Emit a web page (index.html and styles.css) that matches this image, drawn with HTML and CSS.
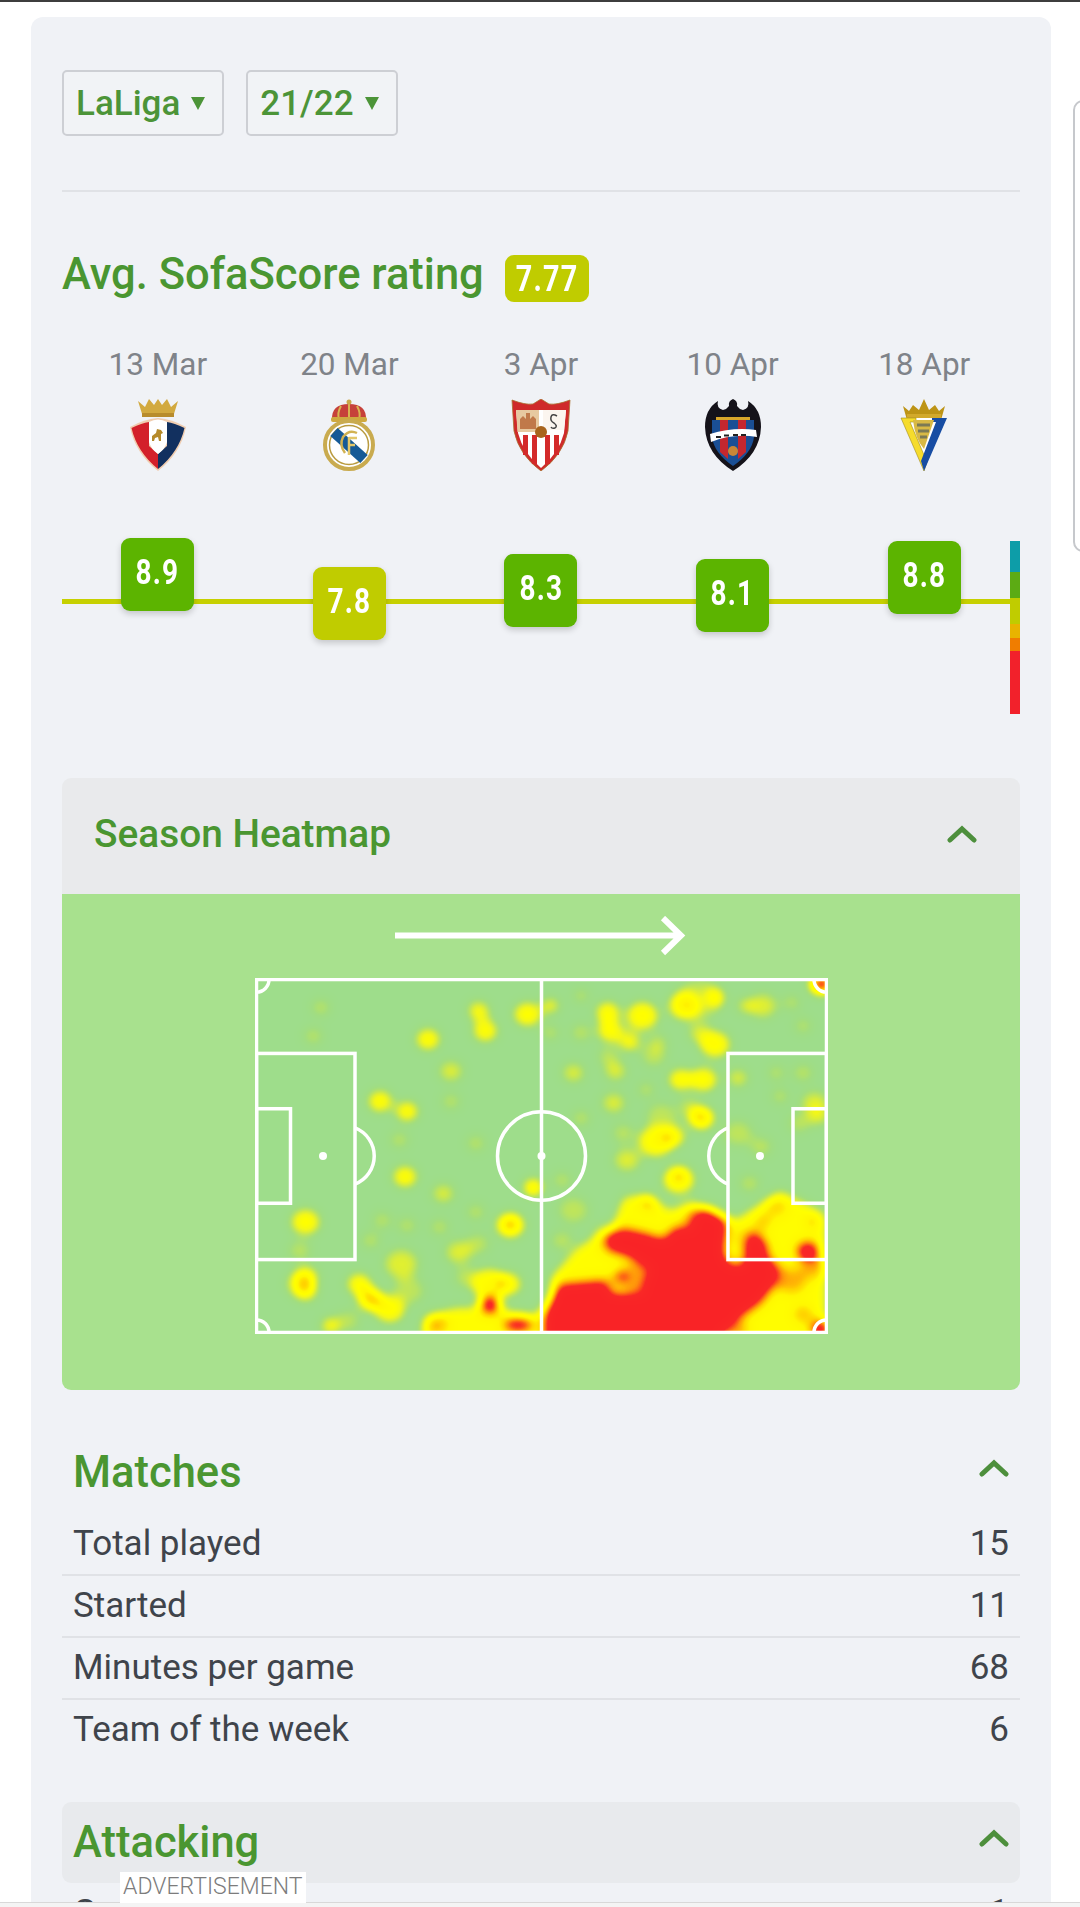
FILE: index.html
```html
<!DOCTYPE html>
<html lang="en">
<head>
<meta charset="utf-8">
<title>Player statistics</title>
<link rel="stylesheet" href="styles.css">
</head>
<body>
<div class="topbar"></div>
<div class="sidepanel"></div>
<main class="card">
  <div class="selects">
    <button class="select">LaLiga<span class="caret"></span></button>
    <button class="select">21/22<span class="caret"></span></button>
  </div>
  <hr class="rule">
  <div class="rating-head">
    <h2 class="rating-title">Avg. SofaScore rating</h2>
    <span class="badge lime"><span class="cond">7.77</span></span>
  </div>
  <div class="matches-grid">
    <div class="match">
      <div class="date">13 Mar</div>
      <svg class="crest" viewBox="0 0 60 72" aria-label="Osasuna">
        <path d="M10 2l7 6 4-8 5 6 4-6 4 6 5-6 4 8 7-6-5 16H15z" fill="#d2a93f"/>
        <rect x="14" y="14" width="32" height="4" fill="#b88c2c"/>
        <path d="M2 28Q16 20 30 19 44 20 58 28 53 54 30 72 7 54 2 28z" fill="#f0cdb0"/>
        <path d="M3.500 29Q14 24 21 23V47L30 55V70Q9 53 3.500 29z" fill="#d3202a"/>
        <path d="M56.500 29Q46 24 39 23V47L30 55V70Q51 53 56.500 29z" fill="#12305f"/>
        <path d="M21 23Q30 18 39 23V43Q37 50 30 55 23 50 21 43z" fill="#fff"/>
        <path d="M24 37l4-3 1-4 4 1 2 3-2 1v7h-2l-1-4-3 1-1 3h-2z" fill="#b58a2a"/>
      </svg>
    </div>
    <div class="match">
      <div class="date">20 Mar</div>
      <svg class="crest" viewBox="0 0 60 72" aria-label="Real Madrid">
        <path d="M13 21Q12 5 30 5 48 5 47 21z" fill="#c6413a"/>
        <path d="M30 5V20M22 7Q18 14 20 20M38 7Q42 14 40 20" stroke="#d9b44f" stroke-width="2" fill="none"/>
        <circle cx="30" cy="3" r="2.500" fill="#c9a94a"/>
        <rect x="12" y="18" width="36" height="5" rx="2" fill="#cfa93f"/>
        <circle cx="30" cy="46" r="24" fill="#fff" stroke="#c9ab4f" stroke-width="4"/>
        <circle cx="30" cy="46" r="19.500" fill="none" stroke="#b99b3f" stroke-width="1.500"/>
        <path d="M15 33L45 60" stroke="#165a96" stroke-width="11"/>
        <path d="M38 34Q30 30 24 38 20 46 26 54" stroke="#d2b252" stroke-width="2.500" fill="none"/>
        <path d="M30 38V56M30 39H38M30 46H36" stroke="#e3c76a" stroke-width="2.500" fill="none"/>
      </svg>
    </div>
    <div class="match">
      <div class="date">3 Apr</div>
      <svg class="crest" viewBox="0 0 60 72" aria-label="Sevilla">
        <path d="M1 1Q14 6 22 5L30 0 38 5Q46 6 59 1L57 32Q52 56 30 72 8 56 3 32z" fill="#cf2a2a" stroke="#a9702e" stroke-width=".800"/>
        <path d="M5 11H55L53 34Q48 54 30 69 12 54 7 34z" fill="#fff"/>
        <path d="M5 11H28V33H6.500z" fill="#e7c9a0"/>
        <path d="M9 30V20l3-3 3 3v-6h4v6l3-3 3 3v10z" fill="#c0794a"/>
        <path d="M32 11H55L53 31H32z" fill="#fbf5ef"/>
        <path d="M46 17Q41 14 40 18 39 22 43 24 47 27 44 29 41 30 40 28" stroke="#444" stroke-width="1.500" fill="none"/>
        <path d="M12 36H17V56H12zM21 36H26V65H21zM34 36H39V65H34zM43 36H48V56H43z" fill="#d42a2a"/>
        <circle cx="30" cy="33" r="6" fill="#a8641d"/>
      </svg>
    </div>
    <div class="match">
      <div class="date">10 Apr</div>
      <svg class="crest" viewBox="0 0 60 72" aria-label="Levante">
        <path d="M30 72Q3 55 2 28 2 10 15 2 13 9 20 11 24 10 26 7 25 2 30 0 35 2 34 7 36 10 40 11 47 9 45 2 58 10 58 28 57 55 30 72z" fill="#15131a"/>
        <path d="M9 21H51V38Q49 54 30 67 11 54 9 38z" fill="#1a4f95"/>
        <path d="M17 21H25V60L17 53zM35 21H43V53L35 60z" fill="#c4272f"/>
        <path d="M7 35Q30 28 53 31L54 38Q30 34 8 43z" fill="#fff"/>
        <path d="M13 38H18M21 36.500H26M30 36H35M38 36H43" stroke="#222" stroke-width="2"/>
        <circle cx="30" cy="52" r="5" fill="#c88736"/>
        <rect x="13" y="18" width="34" height="3" fill="#d9a72b"/>
      </svg>
    </div>
    <div class="match">
      <div class="date">18 Apr</div>
      <svg class="crest" viewBox="0 0 60 72" aria-label="Cadiz">
        <path d="M9 7l6 5 4-6 6 5 5-11 5 11 6-5 4 6 6-5-4 14H13z" fill="#bd9416"/>
        <rect x="13" y="15" width="34" height="4" fill="#d2a92b"/>
        <path d="M7 19H53L30 72z" fill="#fff"/>
        <path d="M7 19H22V23H16L33 63 30 72z" fill="#f6dc2c" stroke="#9f8a1c" stroke-width=".600"/>
        <path d="M38 19H53L30 72 27 62 42 23H38z" fill="#174da3"/>
        <path d="M19 21H40L30 50Q21 40 19 21z" fill="#d8b945"/>
        <path d="M23 26H36M24 32H35M26 38H33" stroke="#7c7a55" stroke-width="3"/>
      </svg>
    </div>
  </div>
  <div class="chart">
    <div class="chart-line"></div>
    <div class="scale">
      <span class="s-teal"></span><span class="s-green"></span><span class="s-lime"></span><span class="s-gold"></span><span class="s-orange"></span><span class="s-red"></span>
    </div>
    <div class="chart-points">
      <div class="point" style="margin-top:0"><span class="score green"><span class="cond">8.9</span></span></div>
      <div class="point" style="margin-top:29px"><span class="score lime"><span class="cond">7.8</span></span></div>
      <div class="point" style="margin-top:16px"><span class="score green"><span class="cond">8.3</span></span></div>
      <div class="point" style="margin-top:21px"><span class="score green"><span class="cond">8.1</span></span></div>
      <div class="point" style="margin-top:3px"><span class="score green"><span class="cond">8.8</span></span></div>
    </div>
  </div>

  <section class="heatmap">
    <header class="heat-head">
      <h3 class="heat-title">Season Heatmap</h3>
      <svg class="chev" viewBox="0 0 30 18"><path d="M3 15L15 4 27 15"/></svg>
    </header>
    <div class="heat-body">
      <svg class="arrow" viewBox="0 0 292 40"><path d="M0 19.500H285M268 2L286 19.500 268 37"/></svg>
      <svg class="pitch" viewBox="0 0 573 354" preserveAspectRatio="none">
        <defs>
          <filter id="heat" filterUnits="userSpaceOnUse" x="-30" y="-30" width="633" height="414" color-interpolation-filters="sRGB">
            <feGaussianBlur stdDeviation="6"/>
            <feColorMatrix type="matrix" values="0 0 0 1 0 0 0 0 1 0 0 0 0 1 0 0 0 0 1 0"/>
            <feComponentTransfer>
              <feFuncR type="table" tableValues=".62 .66 .76 .86 .95 1 1 1 1 .98 .98"/>
              <feFuncG type="table" tableValues=".85 .87 .9 .93 .97 1 .97 .82 .55 .16 .14"/>
              <feFuncB type="table" tableValues=".45 .42 .33 .22 .1 0 0 0 .05 .15 .15"/>
              <feFuncA type="table" tableValues="0 .3 .65 .9 1 1 1 1 1 1 1"/>
            </feComponentTransfer>
          </filter>
          <clipPath id="pitch-clip"><rect width="573" height="354"/></clipPath>
        </defs>
        <rect class="turf" width="573" height="354"/>
        <g clip-path="url(#pitch-clip)">
          <g filter="url(#heat)">
            <g transform="translate(-14.500 -79) scale(.3827 .3333)">
              <g fill="#000" fill-opacity=".24">
                <circle cx="210" cy="325" r="26"/><circle cx="190" cy="410" r="26"/><circle cx="620" cy="330" r="28"/><circle cx="810" cy="320" r="26"/><circle cx="890" cy="290" r="22"/><circle cx="1440" cy="310" r="24"/><circle cx="1470" cy="380" r="24"/><circle cx="890" cy="400" r="28"/><circle cx="810" cy="400" r="24"/><circle cx="1080" cy="470" r="34"/><circle cx="960" cy="470" r="28"/><circle cx="1090" cy="430" r="28"/><circle cx="1400" cy="520" r="24"/><circle cx="1470" cy="520" r="28"/><circle cx="1060" cy="570" r="24"/><circle cx="1410" cy="590" r="24"/><circle cx="890" cy="655" r="26"/><circle cx="550" cy="605" r="26"/><circle cx="415" cy="720" r="26"/><circle cx="615" cy="730" r="26"/><circle cx="840" cy="840" r="26"/><circle cx="1330" cy="850" r="28"/><circle cx="1360" cy="740" r="30"/><circle cx="520" cy="980" r="26"/><circle cx="370" cy="960" r="26"/><circle cx="435" cy="975" r="26"/><circle cx="615" cy="935" r="26"/><circle cx="870" cy="930" r="42"/><circle cx="840" cy="1020" r="30"/><circle cx="1460" cy="670" r="30"/><circle cx="340" cy="1020" r="26"/><circle cx="155" cy="1050" r="30"/><circle cx="590" cy="1130" r="32"/><circle cx="1170" cy="620" r="28"/><circle cx="950" cy="1000" r="32"/><circle cx="1200" cy="300" r="62"/><circle cx="1100" cy="650" r="42"/><circle cx="1010" cy="420" r="32"/><circle cx="620" cy="1030" r="32"/><circle cx="280" cy="1260" r="32"/><circle cx="440" cy="1170" r="42"/><circle cx="1320" cy="1010" r="32"/><circle cx="1300" cy="700" r="40"/><circle cx="1000" cy="700" r="30"/>
              </g>
              <g fill="#000" fill-opacity=".34">
                <circle cx="625" cy="340" r="28"/><circle cx="810" cy="320" r="18"/><circle cx="530" cy="880" r="30"/><circle cx="975" cy="610" r="32"/><circle cx="550" cy="515" r="32"/><circle cx="870" cy="520" r="30"/><circle cx="980" cy="515" r="30"/><circle cx="1300" cy="535" r="28"/><circle cx="1365" cy="320" r="38"/><circle cx="1320" cy="320" r="24"/><circle cx="1010" cy="780" r="36"/><circle cx="1500" cy="610" r="36"/><circle cx="1510" cy="650" r="28"/><circle cx="1200" cy="400" r="30"/><circle cx="420" cy="1090" r="46"/><circle cx="570" cy="1055" r="36"/><circle cx="155" cy="1150" r="36"/><circle cx="1400" cy="920" r="32"/><circle cx="1020" cy="430" r="26"/><circle cx="1200" cy="650" r="32"/><circle cx="765" cy="860" r="28"/>
              </g>
              <g fill="#000" fill-opacity=".52">
                <circle cx="750" cy="345" r="36"/><circle cx="640" cy="395" r="32"/><circle cx="490" cy="420" r="32"/><circle cx="365" cy="605" r="32"/><circle cx="435" cy="635" r="30"/><circle cx="430" cy="830" r="32"/><circle cx="960" cy="340" r="32"/><circle cx="965" cy="395" r="32"/><circle cx="1050" cy="350" r="42"/><circle cx="1160" cy="320" r="42"/><circle cx="1240" cy="295" r="26"/><circle cx="1240" cy="435" r="40"/><circle cx="1150" cy="540" r="32"/><circle cx="1210" cy="540" r="36"/><circle cx="1205" cy="655" r="34"/><circle cx="1085" cy="725" r="46"/><circle cx="1130" cy="710" r="32"/><circle cx="170" cy="965" r="38"/><circle cx="170" cy="1130" r="32"/><circle cx="170" cy="1170" r="30"/><circle cx="390" cy="1225" r="40"/><circle cx="310" cy="1150" r="32"/><circle cx="340" cy="1195" r="36"/><circle cx="235" cy="1275" r="24"/><circle cx="650" cy="1150" r="46"/><circle cx="700" cy="1150" r="34"/><circle cx="705" cy="975" r="38"/><circle cx="765" cy="865" r="22"/><circle cx="1145" cy="840" r="42"/>
                <path d="M810 1340V1130L880 1040 970 980 1000 890 1070 880 1120 930 1180 900 1260 950 1290 960 1410 870 1530 940V1340z"/>
                <path d="M470 1340L480 1250 560 1220 640 1220 780 1240V1340z"/>
              </g>
              <g fill="#000" fill-opacity=".48">
                <circle cx="705" cy="972" r="24"/><circle cx="1145" cy="825" r="22"/><circle cx="1065" cy="910" r="22"/><circle cx="1365" cy="965" r="22"/><circle cx="1495" cy="965" r="18"/><circle cx="340" cy="1195" r="22"/><circle cx="510" cy="1270" r="34"/><circle cx="1440" cy="1140" r="42"/><circle cx="1500" cy="1100" r="36"/><circle cx="1200" cy="960" r="44"/><circle cx="1040" cy="1130" r="44"/><circle cx="1470" cy="1240" r="26"/><circle cx="1300" cy="1290" r="30"/>
              </g>
              <path fill="none" stroke="#000" stroke-opacity=".42" stroke-width="46" stroke-linejoin="round" d="M800 1340L800 1240 840 1160 950 1150 960 1190 1060 1190 1070 1140 1090 1100 1020 1060 965 1040 965 1010 1000 995 1060 1010 1110 1030 1140 990 1185 1000 1200 1020 1190 960 1220 935 1260 960 1255 1010 1250 1060 1270 1100 1320 1110 1340 1010 1365 1040 1370 1080 1395 1100 1390 1140 1350 1200 1300 1240 1250 1290 1240 1340z"/>
              <g fill="#000" stroke="#000">
                <path stroke-width="20" d="M800 1340L800 1240 840 1160 950 1150 960 1190 1060 1190 1070 1140 1090 1100 1020 1060 965 1040 965 1010 1000 995 1060 1010 1110 1030 1140 990 1185 1000 1200 1020 1190 960 1220 935 1260 960 1255 1010 1250 1060 1270 1100 1320 1110 1340 1010 1365 1040 1370 1080 1395 1100 1390 1140 1350 1200 1300 1240 1250 1290 1240 1340z"/>
                <ellipse cx="1345" cy="1040" rx="30" ry="40"/><circle cx="1482" cy="1052" r="32"/><circle cx="652" cy="1212" r="30"/><ellipse cx="725" cy="1272" rx="42" ry="22"/><circle cx="995" cy="1128" r="20"/><circle cx="1518" cy="255" r="30"/><circle cx="1518" cy="1285" r="30"/>
              </g>
            </g>
          </g>
        </g>
        <g class="lines">
          <rect x="1.500" y="1.500" width="570" height="351"/>
          <path d="M286.500 1.500V352.500"/>
          <circle cx="286.500" cy="177" r="44"/>
          <rect x="1.500" y="75" width="98.500" height="205"/>
          <rect x="1.500" y="130" width="34" height="94"/>
          <path d="M100 149A30 30 0 0 1 100 205"/>
          <rect x="473" y="75" width="98.500" height="205"/>
          <rect x="538" y="130" width="33.500" height="94"/>
          <path d="M473 149A30 30 0 0 0 473 205"/>
          <path d="M1.500 14A12.500 12.500 0 0 0 14 1.500M1.500 340A12.500 12.500 0 0 1 14 352.500M559 1.500A12.500 12.500 0 0 0 571.500 14M559 352.500A12.500 12.500 0 0 1 571.500 340"/>
        </g>
        <g fill="#fff">
          <circle cx="68" cy="177" r="4"/><circle cx="286.500" cy="177" r="4"/><circle cx="505" cy="177" r="4"/>
        </g>
      </svg>
    </div>
  </section>

  <section class="stats">
    <header class="stats-head">
      <h3 class="stats-title">Matches</h3>
      <svg class="chev" viewBox="0 0 30 18"><path d="M3 15L15 4 27 15"/></svg>
    </header>
    <div class="row"><span>Total played</span><span>15</span></div>
    <div class="row"><span>Started</span><span>11</span></div>
    <div class="row"><span>Minutes per game</span><span>68</span></div>
    <div class="row last"><span>Team of the week</span><span>6</span></div>
  </section>

  <section class="stats attacking">
    <header class="stats-head shaded">
      <h3 class="stats-title">Attacking</h3>
      <svg class="chev" viewBox="0 0 30 18"><path d="M3 15L15 4 27 15"/></svg>
    </header>
    <div class="row"><span>Goals</span><span>1</span></div>
  </section>
</main>
<aside class="adbar"><span class="adlabel">ADVERTISEMENT</span></aside>
</body>
</html>
```
FILE: styles.css
```css
* { box-sizing: border-box; }
html, body { margin: 0; height: 1907px; overflow: hidden; background: #fff; }
body { position: relative; font-family: Roboto, "Liberation Sans", sans-serif; }
h2, h3 { margin: 0; font-weight: 500; }

.topbar { height: 2px; background: #3d3d3d; }
.sidepanel {
  position: absolute; left: 1073px; top: 100px; width: 40px; height: 452px;
  border: 2px solid #c6c8cc; border-radius: 10px; background: #fff;
}

.card {
  width: 1020px; margin: 15px 0 0 31px; padding: 53px 31px 0;
  background: #f0f2f6; border-radius: 12px 12px 0 0;
}

.selects { display: flex; gap: 22px; }
.select {
  display: flex; align-items: center; height: 66px; padding: 0 17px 0 12px;
  font: 500 35px/1 Roboto, sans-serif; color: #4c9438;
  background: #f1f3f6; border: 2px solid #cdcfd4; border-radius: 5px;
}
.caret {
  width: 0; height: 0; margin-left: 11px;
  border-left: 7px solid transparent; border-right: 7px solid transparent; border-top: 13px solid #4c9438;
}
.rule { height: 2px; margin: 54px 0 0; border: 0; background: #e0e2e6; }

.rating-head { display: flex; align-items: center; gap: 21px; height: 47px; margin-top: 63px; }
.rating-title { font-size: 43.500px; line-height: 47px; color: #4a9631; margin-bottom: 8px; }
.cond { display: inline-block; font-weight: 700; transform: scaleX(.8); letter-spacing: 1.500px; }
.badge {
  display: flex; align-items: center; justify-content: center; width: 84px; height: 47px;
  font-size: 36px; color: #fff; border-radius: 9px;
}
.lime { background: #c0cc00; }
.green { background: #5cb400; }

.matches-grid { display: grid; grid-template-columns: repeat(5, 1fr); margin-top: 45px; }
.match { display: flex; flex-direction: column; align-items: center; }
.date { font-size: 31.500px; line-height: 36px; color: #7f8389; }
.crest { display: block; width: 60px; height: 72px; margin-top: 16px; }

.chart { position: relative; height: 176px; margin-top: 67px; }
.chart-line { position: absolute; left: 0; right: 8px; top: 61px; height: 5px; background: #c6d000; }
.scale { position: absolute; right: 0; top: 3px; width: 10px; height: 173px; display: flex; flex-direction: column; }
.s-teal { height: 31px; background: #0d9da8; }
.s-green { height: 26px; background: #5cab14; }
.s-lime { height: 26px; background: #c0cc00; }
.s-gold { height: 14px; background: #e8b400; }
.s-orange { height: 13px; background: #f07d00; }
.s-red { height: 63px; background: #f2212b; }
.chart-points { position: relative; display: grid; grid-template-columns: repeat(5, 1fr); }
.point { display: flex; justify-content: center; }
.score {
  display: flex; align-items: center; justify-content: center; width: 73px; height: 73px; padding-bottom: 4px;
  font-size: 35px; color: #fff; border-radius: 9px; box-shadow: 0 3px 6px rgba(0, 0, 0, .18);
}

.heatmap { margin-top: 64px; }
.heat-head {
  display: flex; align-items: center; justify-content: space-between; height: 116px;
  padding: 0 43px 4px 32px; background: #e9eaec; border-radius: 9px 9px 0 0;
}
.heat-title { font-size: 38.800px; line-height: 44px; color: #4a9631; }
.chev { display: block; width: 30px; height: 18px; }
.chev path { fill: none; stroke: #4d8f3c; stroke-width: 5; stroke-linecap: round; }
.heat-body {
  display: flex; flex-direction: column; align-items: center; height: 496px; padding-top: 22px;
  background: #a8e18e; border-radius: 0 0 9px 9px;
}
.arrow { display: block; width: 292px; height: 40px; }
.arrow path { fill: none; stroke: #fff; stroke-width: 6; }
.pitch { display: block; width: 573px; height: 356px; margin-top: 22px; }
.turf { fill: #9edd8b; }
.lines * { fill: none; stroke: #fff; stroke-width: 3.500; }

.stats { margin-top: 58px; }
.stats-head { display: flex; align-items: center; justify-content: space-between; padding: 0 11px; margin-bottom: 16px; }
.stats-title { font-size: 43.500px; line-height: 50px; color: #4a9631; }
.stats-head .chev { margin-bottom: 10px; }
.row {
  display: flex; justify-content: space-between; padding: 10px 11px;
  font-size: 35px; line-height: 40px; color: #3f444b; border-bottom: 2px solid #e0e2e6;
}
.row.last { border-bottom: 0; padding-bottom: 9px; }
.attacking { margin-top: 43px; }
.stats-head.shaded { height: 81px; margin-bottom: 0; background: #e8eaed; border-radius: 9px; }

.adbar {
  position: absolute; left: 0; right: 0; bottom: 0; height: 5px;
  background: #f4f4f4; border-top: 1px solid #d8d8d8;
}
.adlabel {
  position: absolute; left: 120px; bottom: 4px; height: 31px; padding: 0 3px;
  font-size: 23px; font-weight: 300; line-height: 30px; color: #7c7c7c; background: #fff; white-space: nowrap;
}
```
